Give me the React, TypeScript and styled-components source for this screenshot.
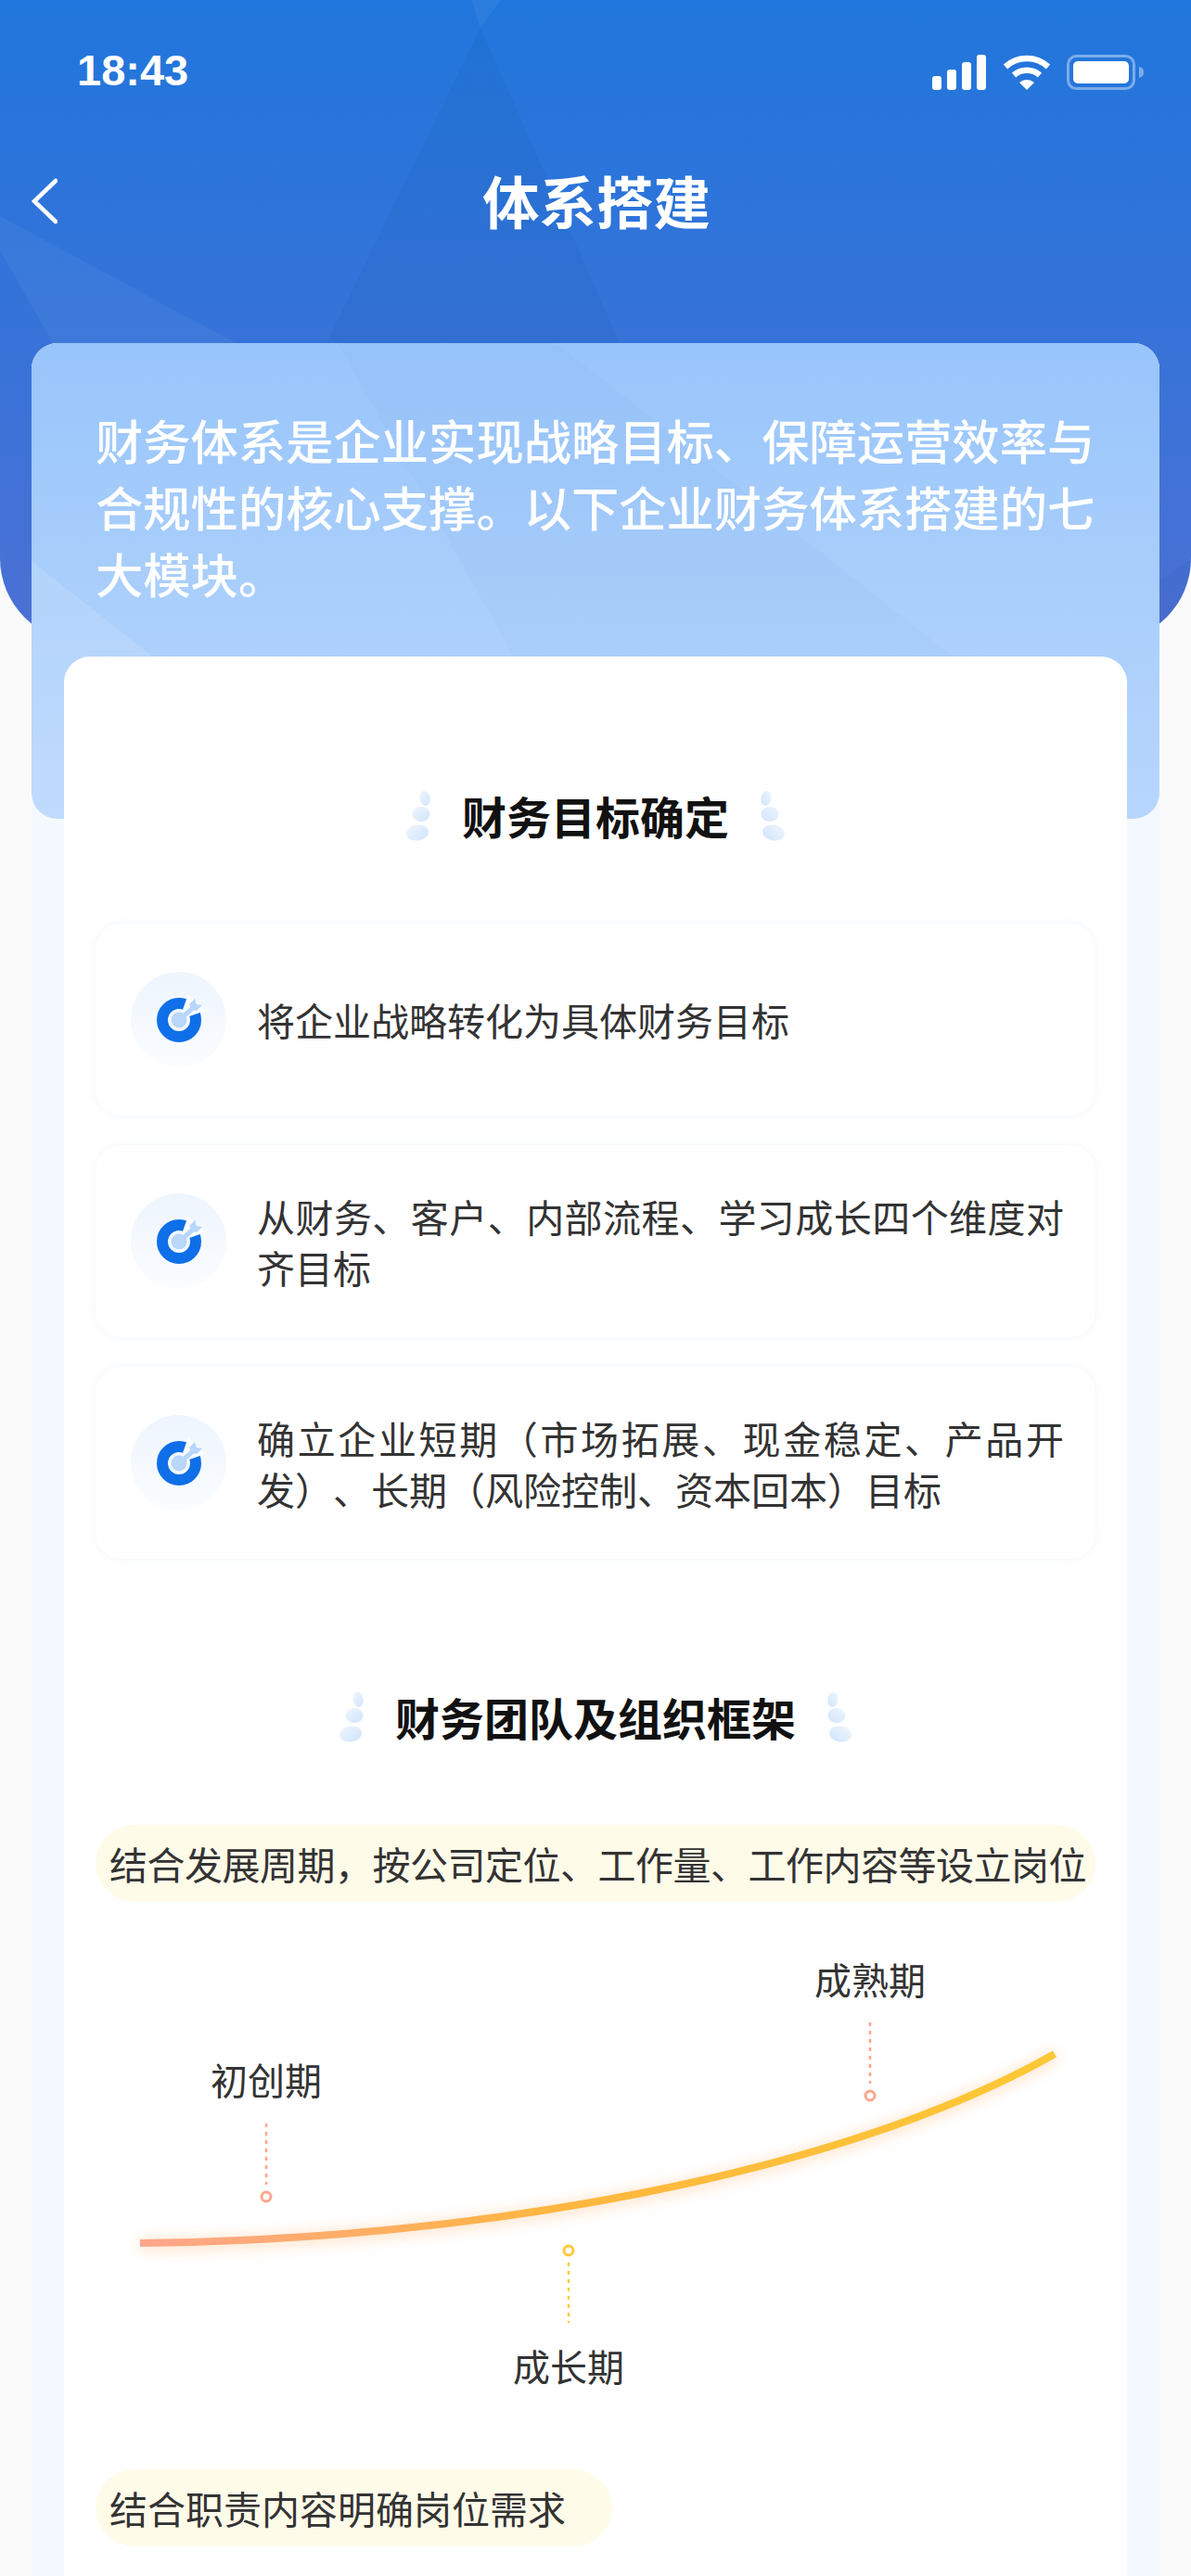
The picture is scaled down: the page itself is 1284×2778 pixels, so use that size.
import React from "react";
import styled, { createGlobalStyle } from "styled-components";

const GlobalStyle = createGlobalStyle`
  html, body {
    margin: 0;
    padding: 0;
    background: #fafafa;
  }
  body {
    font-family: "Noto Sans CJK SC", "Liberation Sans", sans-serif;
    text-spacing-trim: space-all;
  }
`;

const Page = styled.div`
  position: relative;
  width: 1284px;
  height: 2778px;
  overflow: hidden;
  background: #fafafa;
`;

const Header = styled.header`
  position: relative;
  height: 692px;
  overflow: hidden;
  border-radius: 0 0 90px 90px;
  background: linear-gradient(180deg, #2076dc 0%, #2f74da 35%, #4c70d4 100%);
`;

const Facets = styled.svg`
  position: absolute;
  inset: 0;
`;

const StatusBar = styled.div`
  position: relative;
  height: 150px;
  display: flex;
  align-items: center;
  justify-content: space-between;
  padding: 0 50px 0 83px;
  color: #fff;
`;

const Clock = styled.span`
  font-family: "Liberation Sans", sans-serif;
  font-size: 47px;
  font-weight: 700;
`;

const StatusIcons = styled.div`
  display: flex;
  align-items: center;
  gap: 17px;
  margin-top: 6px;
`;

const Nav = styled.nav`
  position: relative;
  height: 134px;
  display: grid;
  grid-template-columns: 1fr auto 1fr;
  align-items: center;
  padding: 0 32px 0 34px;
`;

const Title = styled.h1`
  margin: 0 0 3px;
  color: #fff;
  font-size: 61.5px;
  font-weight: 700;
  line-height: 80px;
`;

const Column = styled.main`
  position: relative;
  margin: -322px 34px 0;
  height: 2408px;
  background: #f4f8ff;
  border-radius: 28px 28px 0 0;
`;

const IntroCard = styled.section`
  position: relative;
  height: 513px;
  box-sizing: border-box;
  padding: 68px 60px 0 69px;
  overflow: hidden;
  border-radius: 28px;
  background: linear-gradient(180deg, #98c5fb 0%, #a9cefb 50%, #b7d6fd 100%);
`;

const IntroFacets = styled.svg`
  position: absolute;
  inset: 0;
`;

const IntroText = styled.p`
  position: relative;
  margin: 0;
  color: #fff;
  font-size: 51.3px;
  font-weight: 500;
  line-height: 72px;
`;

const Panel = styled.div`
  position: relative;
  margin: -175px 35px 0;
  height: 2070px;
  box-sizing: border-box;
  padding: 142px 34px 0;
  background: #fff;
  border-radius: 28px 28px 0 0;
`;

const SectionTitle = styled.div<{ $top?: number }>`
  display: flex;
  align-items: center;
  justify-content: center;
  gap: 34px;
  height: 60px;
  margin-top: ${(p) => p.$top ?? 0}px;
  margin-bottom: 86px;
`;

const SectionName = styled.span`
  margin-bottom: 3px;
  color: #111;
  font-size: 48px;
  font-weight: 700;
`;

const CardList = styled.div`
  display: flex;
  flex-direction: column;
  gap: 32px;
`;

const Item = styled.div`
  display: flex;
  align-items: center;
  gap: 33px;
  height: 207px;
  box-sizing: border-box;
  padding: 0 0 0 38px;
  border-radius: 28px;
  background: #fff;
  box-shadow: 0 0 10px rgba(90, 130, 200, 0.09);
`;

const IconCircle = styled.div`
  flex: none;
  display: flex;
  align-items: center;
  justify-content: center;
  width: 103px;
  height: 103px;
  border-radius: 50%;
  background: linear-gradient(180deg, #eef5fe 0%, #fbfdff 100%);
`;

const ItemText = styled.div`
  width: 870px;
  color: #333;
  font-size: 41px;
  line-height: 55px;
  text-align: justify;
`;

const Pill = styled.div<{ $full?: boolean }>`
  display: flex;
  align-items: center;
  width: ${(p) => (p.$full ? "100%" : "557px")};
  height: 83px;
  box-sizing: border-box;
  padding: 0 0 2px 15px;
  border-radius: 42px;
  background: #fffbe9;
  color: #333;
  font-size: 41px;
  letter-spacing: ${(p) => (p.$full ? "-0.5px" : "0")};
  white-space: nowrap;
`;

const Chart = styled.div`
  position: relative;
  height: 612px;
`;

const ChartSvg = styled.svg`
  position: absolute;
  inset: 0;
  overflow: visible;
`;

const Curve = styled.path`
  filter: drop-shadow(0 2px 8px rgba(255, 170, 90, 0.5));
`;

const StageLabel = styled.span<{ $x: number; $y: number }>`
  position: absolute;
  left: ${(p) => p.$x}px;
  top: ${(p) => p.$y}px;
  transform: translate(-50%, -50%);
  color: #333;
  font-size: 40px;
  white-space: nowrap;
`;

const items = [
  "将企业战略转化为具体财务目标",
  "从财务、客户、内部流程、学习成长四个维度对齐目标",
  "确立企业短期（市场拓展、现金稳定、产品开发）、长期（风险控制、资本回本）目标",
];

const stages = [
  { label: "初创期", x: 184, labelY: 191, from: 239, to: 305, dot: 318, color: "#ffa58c" },
  { label: "成长期", x: 510, labelY: 500, from: 389, to: 454, dot: 376, color: "#ffc93c" },
  { label: "成熟期", x: 835, labelY: 83, from: 130, to: 196, dot: 209, color: "#ffa58c" },
];

function Droplets({ flip }: { flip?: boolean }) {
  const id = flip ? "dropR" : "dropL";
  return (
    <svg width="26" height="54" viewBox="0 0 26 54">
      <defs>
        <linearGradient id={id} x1="1" y1="1" x2="0" y2="0">
          <stop offset="0" stopColor="#d0e4fb" />
          <stop offset="1" stopColor="#f0f6fe" />
        </linearGradient>
      </defs>
      <g transform={flip ? "translate(26 0) scale(-1 1)" : undefined} fill={`url(#${id})`}>
        <ellipse cx="20" cy="8" rx="5.5" ry="8" transform="rotate(-10 20 8)" />
        <ellipse cx="16" cy="25" rx="9.5" ry="8" />
        <ellipse cx="12" cy="45" rx="12" ry="8.5" transform="rotate(-8 12 45)" />
      </g>
    </svg>
  );
}

function TargetIcon() {
  return (
    <svg width="60" height="60" viewBox="0 0 60 60">
      <circle cx="30" cy="30" r="18" fill="none" stroke="#0f6fe8" strokeWidth="12" />
      <path d="M30 30 L40 2 L58 20 Z" fill="#fdfeff" />
      <circle cx="30" cy="30" r="8.5" fill="#b9d6fb" />
      <path d="M30 30 L46 16" stroke="#b9d6fb" strokeWidth="5" />
      <path d="M41 13 L47 7 L49 13 L55 14 L49 20 L44 19 Z" fill="#b9d6fb" />
    </svg>
  );
}

export default function App() {
  return (
    <Page>
      <GlobalStyle />
      <Header>
        <Facets width="1284" height="692" viewBox="0 0 1284 692">
          <path d="M508 0 H540 L518 30 Z" fill="#fff" opacity="0.05" />
          <path d="M518 30 L352 370 L200 692 H800 L668 370 Z" fill="#14509f" opacity="0.1" />
          <path d="M0 233 L254 370 L420 692 H200 L57 370 L0 270 Z" fill="#fff" opacity="0.045" />
          <path d="M1248 627 L1284 603 V692 H1248 Z" fill="#20408f" opacity="0.08" />
        </Facets>
        <StatusBar>
          <Clock>18:43</Clock>
          <StatusIcons>
            <svg width="59" height="38" viewBox="0 0 59 38" fill="#fff">
              <rect x="0" y="23" width="10" height="15" rx="3" />
              <rect x="16" y="16" width="10" height="22" rx="3" />
              <rect x="32" y="8" width="10" height="30" rx="3" />
              <rect x="48" y="0" width="10" height="38" rx="3" />
            </svg>
            <svg width="52" height="38" viewBox="0 0 52 38" fill="none" stroke="#fff" strokeWidth="6.5">
              <path d="M3 13 C16 1 36 1 49 13" />
              <path d="M12 22 C20 15 32 15 40 22" />
              <path d="M18 30 L26 38 L34 30 C29 26 23 26 18 30 Z" fill="#fff" stroke="none" />
            </svg>
            <svg width="84" height="38" viewBox="0 0 84 38">
              <rect x="1.5" y="1.5" width="71" height="35" rx="9" fill="none" stroke="#fff" strokeOpacity="0.4" strokeWidth="3" />
              <rect x="7" y="7" width="60" height="24" rx="5" fill="#fff" />
              <path d="M78 13 C82 14 83 16 83 19 C83 22 82 24 78 25 Z" fill="#fff" fillOpacity="0.4" />
            </svg>
          </StatusIcons>
        </StatusBar>
        <Nav>
          <svg width="28" height="50" viewBox="0 0 28 50" fill="none" stroke="#fff" strokeWidth="4.5" strokeLinecap="round">
            <path d="M26 3 L3 25 L26 47" />
          </svg>
          <Title>体系搭建</Title>
        </Nav>
      </Header>
      <Column>
        <IntroCard>
          <IntroFacets width="1216" height="513" viewBox="0 0 1216 513">
            <path d="M330 0 H566 L993 338 H520 Z" fill="#3f78c8" opacity="0.03" />
            <path d="M0 235 L130 338 V513 H0 Z" fill="#fff" opacity="0.12" />
          </IntroFacets>
          <IntroText>
            财务体系是企业实现战略目标、保障运营效率与合规性的核心支撑。以下企业财务体系搭建的七大模块。
          </IntroText>
        </IntroCard>
        <Panel>
          <SectionTitle>
            <Droplets />
            <SectionName>财务目标确定</SectionName>
            <Droplets flip />
          </SectionTitle>
          <CardList>
            {items.map((text) => (
              <Item key={text}>
                <IconCircle>
                  <TargetIcon />
                </IconCircle>
                <ItemText>{text}</ItemText>
              </Item>
            ))}
          </CardList>
          <SectionTitle $top={141}>
            <Droplets />
            <SectionName>财务团队及组织框架</SectionName>
            <Droplets flip />
          </SectionTitle>
          <Pill $full>结合发展周期，按公司定位、工作量、工作内容等设立岗位</Pill>
          <Chart>
            <ChartSvg width="1078" height="612" viewBox="0 0 1078 612" fill="none">
              <defs>
                <linearGradient id="curveStroke" gradientUnits="userSpaceOnUse" x1="48" y1="0" x2="1034" y2="0">
                  <stop offset="0" stopColor="#ffa58c" />
                  <stop offset="0.45" stopColor="#ffb640" />
                  <stop offset="1" stopColor="#fcc834" />
                </linearGradient>
              </defs>
              <Curve d="M48 368 C400 365 800 297 1034 164" stroke="url(#curveStroke)" strokeWidth="8" />
              {stages.map((s) => (
                <g key={s.label} stroke={s.color}>
                  <line x1={s.x} x2={s.x} y1={s.from} y2={s.to} strokeWidth="2.5" strokeDasharray="4 5" />
                  <circle cx={s.x} cy={s.dot} r="5" strokeWidth="3" fill="#fff" />
                </g>
              ))}
            </ChartSvg>
            {stages.map((s) => (
              <StageLabel key={s.label} $x={s.x} $y={s.labelY}>
                {s.label}
              </StageLabel>
            ))}
          </Chart>
          <Pill>结合职责内容明确岗位需求</Pill>
        </Panel>
      </Column>
    </Page>
  );
}
